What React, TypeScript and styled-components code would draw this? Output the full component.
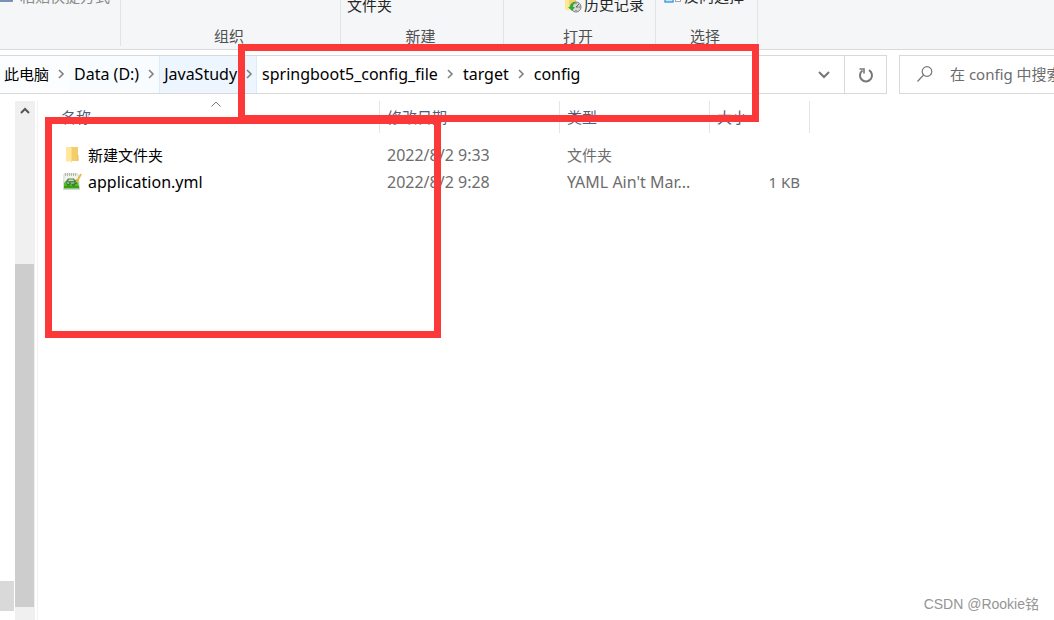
import React from "react";
import styled, { createGlobalStyle } from "styled-components";

const GlobalStyle = createGlobalStyle`
  *, *::before, *::after { box-sizing: border-box; }
  body {
    margin: 0;
    background: #fff;
    color: #000;
    font: 15px/20px "Noto Sans", "Noto Sans CJK SC", sans-serif;
  }
  button, input { font: inherit; color: inherit; margin: 0; padding: 0; border: 0; background: none; }
  svg { display: block; flex: none; }
`;

const Window = styled.div`
  position: relative;
  display: flex;
  flex-direction: column;
  height: 100vh;
  overflow: hidden;
`;

const Ribbon = styled.header`
  display: flex;
  flex: none;
  height: 50px;
  padding-bottom: 3px;
  background: #f5f6f7;
  border-bottom: 1px solid #d9dadb;
  overflow: hidden;
`;

const Group = styled.section<{ $width: number }>`
  display: flex;
  flex-direction: column;
  justify-content: flex-end;
  flex: none;
  width: ${(p) => p.$width}px;
  border-right: 1px solid #e2e3e4;
`;

const Commands = styled.div<{ $lift: number; $indent: number }>`
  display: flex;
  flex-direction: column;
  align-items: flex-start;
  padding: 0 0 ${(p) => p.$lift}px ${(p) => p.$indent}px;
`;

const Command = styled.button<{ $muted?: boolean }>`
  display: flex;
  align-items: center;
  gap: ${(p) => (p.$muted ? 6 : 2)}px;
  height: 20px;
  white-space: nowrap;
  color: ${(p) => (p.$muted ? "#8a8a8a" : "#262626")};
`;

const GroupName = styled.div`
  height: 20px;
  padding-right: 3px;
  text-align: center;
  color: #505050;
`;

const Toolbar = styled.div`
  display: flex;
  flex: none;
  gap: 12px;
  height: 39px;
  margin-top: 5px;
`;

const AddressBar = styled.nav`
  display: flex;
  flex: 1;
  min-width: 0;
  border: 1px solid #d9d9d9;
  border-left: 0;
`;

const Crumbs = styled.div`
  display: flex;
  flex: 1;
  min-width: 0;
  margin-left: -1px;
`;

const Crumb = styled.div<{ $tone?: string; $edge?: string }>`
  display: flex;
  flex: none;
  background: ${(p) => p.$tone ?? "transparent"};
  border-left: 1px solid ${(p) => p.$edge ?? "transparent"};
  box-shadow: ${(p) => (p.$edge ? `inset -1px 0 ${p.$edge}` : "none")};
`;

const CrumbName = styled.button<{ $latin: boolean }>`
  padding: 0 4px 2px;
  font-size: ${(p) => (p.$latin ? 16 : 15)}px;
  white-space: nowrap;
`;

const CrumbArrow = styled.button`
  display: grid;
  place-items: center;
  width: 16px;
  padding-bottom: 2px;
`;

const IconButton = styled.button<{ $divided?: boolean }>`
  display: grid;
  place-items: center;
  flex: none;
  width: 42px;
  border-left: 1px solid ${(p) => (p.$divided ? "#d9d9d9" : "transparent")};
`;

const Search = styled.label`
  display: flex;
  align-items: center;
  gap: 15px;
  flex: none;
  width: 155px;
  padding: 0 0 2px 17px;
  border: 1px solid #d9d9d9;
  border-right: 0;
`;

const SearchInput = styled.input`
  flex: 1;
  min-width: 0;
  height: 24px;
  outline: 0;
  &::placeholder { color: #6d6d6d; opacity: 1; }
`;

const Body = styled.main`
  display: flex;
  flex: 1;
  min-height: 0;
  padding-top: 7px;
`;

const NavPane = styled.aside`
  display: flex;
  flex-direction: column;
  justify-content: flex-end;
  width: 15px;
  padding: 0 1px 9px 0;
`;

const NavItem = styled.div`
  height: 30px;
  background: #d9d9d9;
`;

const ScrollTrack = styled.div`
  display: flex;
  flex-direction: column;
  width: 20px;
  padding: 0 1px 13px 0;
  background: #f0f0f0;
`;

const ScrollButton = styled.button`
  display: grid;
  place-items: center;
  height: 20px;
`;

const ScrollThumb = styled.div`
  flex: 1;
  margin-top: 143px;
  background: #cdcdcd;
`;

const FilePane = styled.section`
  flex: 1;
  margin-left: 2px;
  border-left: 1px solid #f2f2f2;
`;

const FileTable = styled.table`
  width: 772px;
  table-layout: fixed;
  border-collapse: separate;
  border-spacing: 0;
`;

const HeadCell = styled.th<{ $width: number; $first?: boolean }>`
  position: relative;
  width: ${(p) => p.$width}px;
  height: 32px;
  padding: 0 0 0 ${(p) => (p.$first ? 23 : 7)}px;
  border-right: 1px solid #e5e5e5;
  font-weight: 400;
  text-align: left;
  color: #4c607a;
`;

const SortMark = styled.span`
  position: absolute;
  top: 0;
  left: 0;
  right: 0;
  display: flex;
  justify-content: center;
  padding-left: 14px;
`;

const FileRows = styled.tbody`
  &::before { content: ""; display: block; height: 8px; }
`;

const Cell = styled.td<{ $right?: boolean; $latin?: boolean }>`
  height: 27px;
  padding: 0 ${(p) => (p.$right ? 10 : 0)}px 0 7px;
  font-size: ${(p) => (p.$latin ? 16 : 15)}px;
  text-align: ${(p) => (p.$right ? "right" : "left")};
  color: #6d6d6d;
  white-space: nowrap;
`;

const NameCell = styled(Cell)`
  padding-left: 25px;
  color: #000;
`;

const FileName = styled.div`
  display: flex;
  align-items: center;
  gap: 6px;
`;

const Highlight = styled.div<{ $x: number; $y: number; $w: number; $h: number }>`
  position: absolute;
  left: ${(p) => p.$x}px;
  top: ${(p) => p.$y}px;
  width: ${(p) => p.$w}px;
  height: ${(p) => p.$h}px;
  border: 7px solid #fc3838;
  pointer-events: none;
`;

const Watermark = styled.div`
  position: absolute;
  right: 15px;
  bottom: 6px;
  font: 14px/20px "Liberation Sans", "Noto Sans CJK SC", sans-serif;
  color: #959595;
`;

const Chevron = () => (
  <svg width="8" height="10" viewBox="0 0 8 10" fill="none" stroke="#808080" strokeWidth="1.6">
    <path d="M2 1l4 4-4 4" />
  </svg>
);

const ShortcutIcon = () => (
  <svg width="14" height="16" viewBox="0 0 14 16">
    <rect x="-3" y="1" width="15" height="12" fill="#e6ebf5" stroke="#7287b3" strokeWidth="1.8" />
  </svg>
);

const HistoryIcon = () => (
  <svg width="18" height="20" viewBox="0 0 18 20">
    <path d="M1 3h4v14l-4-2z" fill="#ffe69b" />
    <path d="M5 3h7v12H5z" fill="#f5d06c" />
    <circle cx="12" cy="13" r="5" fill="#d7d7d7" stroke="#7d7d7d" />
    <path d="M12 13l3-3M12 13h2.500M12 9v1M12 16v1M15 13h1" stroke="#666" fill="none" />
    <path d="M11 8c-3 0-5 2-5.200 5H4l4 4 3-4H9c0-2 .8-3.500 3-4z" fill="#2cae35" />
  </svg>
);

const InvertIcon = () => (
  <svg width="18" height="16" viewBox="0 0 18 16">
    <rect x="1" y="6" width="8" height="8" fill="#c9e7fb" stroke="#3d9ddd" strokeWidth="1.4" />
    <rect x="11.500" y="7.500" width="5" height="6" fill="#fff" stroke="#a5a5a5" />
  </svg>
);

const FolderIcon = () => (
  <svg width="19" height="18" viewBox="0 0 19 18">
    <path d="M7 1h8v14H7z" fill="#f3cf6c" />
    <path d="M14 9h1.500v6H14z" fill="#edc35a" />
    <path d="M3 1h4.500l1.500 1.500V17l-1.500-1.500H3z" fill="#ffe79e" />
    <path d="M8.500 2.500V16" stroke="#f9dc88" />
  </svg>
);

const YamlIcon = () => (
  <svg width="19" height="18" viewBox="0 0 19 18">
    <path d="M1 1h14l1.500 15.500H.5z" fill="#f0f2ee" stroke="#c4c8c2" strokeWidth=".7" />
    <path d="M2.500 0v3M4.500 0v3M6.500 0v3M8.500 0v3M10.500 0v3M12.500 0v3" stroke="#9aa096" strokeWidth=".7" />
    <path d="M1 9.500c5-1.500 9-1.500 14-3.500l1 9H1z" fill="#55c322" />
    <path d="M1 12.500c5 1.500 9-.5 15 .5l.2 2.500H1z" fill="#36a214" />
    <path d="M2.500 8.500L5 5.500h6l2 3v3h-10z" fill="#4f8a48" />
    <path d="M5 8l1-1.500h4l1 1.500z" fill="#c9dcc0" />
    <path d="M4 10h2M8 10h3" stroke="#b5d8a4" />
    <path d="M4 12h3M9 12h3" stroke="#245c1b" />
    <path d="M18 1l-4.500 8.500" stroke="#ecb43c" strokeWidth="1.7" />
    <path d="M13.500 9.500l-.7 1.500" stroke="#444" />
  </svg>
);

const crumbs = [
  { name: "此电脑", tone: "#fcfdff" },
  { name: "Data (D:)", tone: "#f8fcff" },
  { name: "JavaStudy", tone: "#edf6fe", edge: "#d9eefc" },
  { name: "springboot5_config_file" },
  { name: "target" },
  { name: "config", last: true },
];

const files = [
  { name: "新建文件夹", date: "2022/8/2 9:33", type: "文件夹", size: "", icon: <FolderIcon /> },
  { name: "application.yml", date: "2022/8/2 9:28", type: "YAML Ain't Mar...", size: "1 KB", icon: <YamlIcon /> },
];

const isLatin = (text: string) => /^[\x20-\x7e]+$/.test(text);

export default function App() {
  return (
    <Window>
      <GlobalStyle />
      <Ribbon>
        <Group $width={121}>
          <Commands $lift={40} $indent={0}>
            <Command $muted><ShortcutIcon />粘贴快捷方式</Command>
          </Commands>
          <GroupName />
        </Group>
        <Group $width={220}><GroupName>组织</GroupName></Group>
        <Group $width={163}>
          <Commands $lift={11} $indent={6}><Command>文件夹</Command></Commands>
          <GroupName>新建</GroupName>
        </Group>
        <Group $width={152}>
          <Commands $lift={12} $indent={60}><Command><HistoryIcon />历史记录</Command></Commands>
          <GroupName>打开</GroupName>
        </Group>
        <Group $width={102}>
          <Commands $lift={20} $indent={8}><Command><InvertIcon />反向选择</Command></Commands>
          <GroupName>选择</GroupName>
        </Group>
      </Ribbon>

      <Toolbar>
        <AddressBar aria-label="地址">
          <Crumbs>
            {crumbs.map((c) => (
              <Crumb key={c.name} $tone={c.tone} $edge={c.edge}>
                <CrumbName $latin={isLatin(c.name)}>{c.name}</CrumbName>
                {!c.last && <CrumbArrow aria-label="展开"><Chevron /></CrumbArrow>}
              </Crumb>
            ))}
          </Crumbs>
          <IconButton aria-label="历史位置">
            <svg width="12" height="8" viewBox="0 0 12 8" fill="none" stroke="#777" strokeWidth="2">
              <path d="M1 1l5 5 5-5" />
            </svg>
          </IconButton>
          <IconButton $divided aria-label="刷新">
            <svg width="16" height="16" viewBox="0 0 16 16" fill="none" stroke="#777" strokeWidth="2">
              <path d="M11 3.200a6 6 0 1 1-6.500.3" />
              <path d="M1.500 2H6v4.500" strokeWidth="1.6" />
            </svg>
          </IconButton>
        </AddressBar>
        <Search>
          <svg width="18" height="18" viewBox="0 0 18 18" fill="none" stroke="#777" strokeWidth="1.2">
            <circle cx="10" cy="6.500" r="4.800" />
            <path d="M6.500 10L.5 16.500" />
          </svg>
          <SearchInput aria-label="搜索" placeholder="在 config 中搜索" />
        </Search>
      </Toolbar>

      <Body>
        <NavPane><NavItem /></NavPane>
        <ScrollTrack>
          <ScrollButton aria-label="向上滚动">
            <svg width="10" height="8" viewBox="0 0 10 8" fill="none" stroke="#555" strokeWidth="2">
              <path d="M1 6l4-4 4 4" />
            </svg>
          </ScrollButton>
          <ScrollThumb />
        </ScrollTrack>
        <FilePane>
          <FileTable>
            <thead>
              <tr>
                <HeadCell $width={342} $first>
                  名称
                  <SortMark>
                    <svg width="12" height="7" viewBox="0 0 12 7" fill="none" stroke="#777">
                      <path d="M1.500 5.500L6 1l4.500 4.500" />
                    </svg>
                  </SortMark>
                </HeadCell>
                <HeadCell $width={180}>修改日期</HeadCell>
                <HeadCell $width={150}>类型</HeadCell>
                <HeadCell $width={100}>大小</HeadCell>
              </tr>
            </thead>
            <FileRows>
              {files.map((f) => (
                <tr key={f.name}>
                  <NameCell $latin={isLatin(f.name)}><FileName>{f.icon}{f.name}</FileName></NameCell>
                  <Cell $latin>{f.date}</Cell>
                  <Cell $latin={isLatin(f.type)}>{f.type}</Cell>
                  <Cell $right>{f.size}</Cell>
                </tr>
              ))}
            </FileRows>
          </FileTable>
        </FilePane>
      </Body>

      <Highlight $x={238} $y={44} $w={521} $h={78} />
      <Highlight $x={45} $y={117} $w={396} $h={221} />
      <Watermark>CSDN @Rookie铭</Watermark>
    </Window>
  );
}
